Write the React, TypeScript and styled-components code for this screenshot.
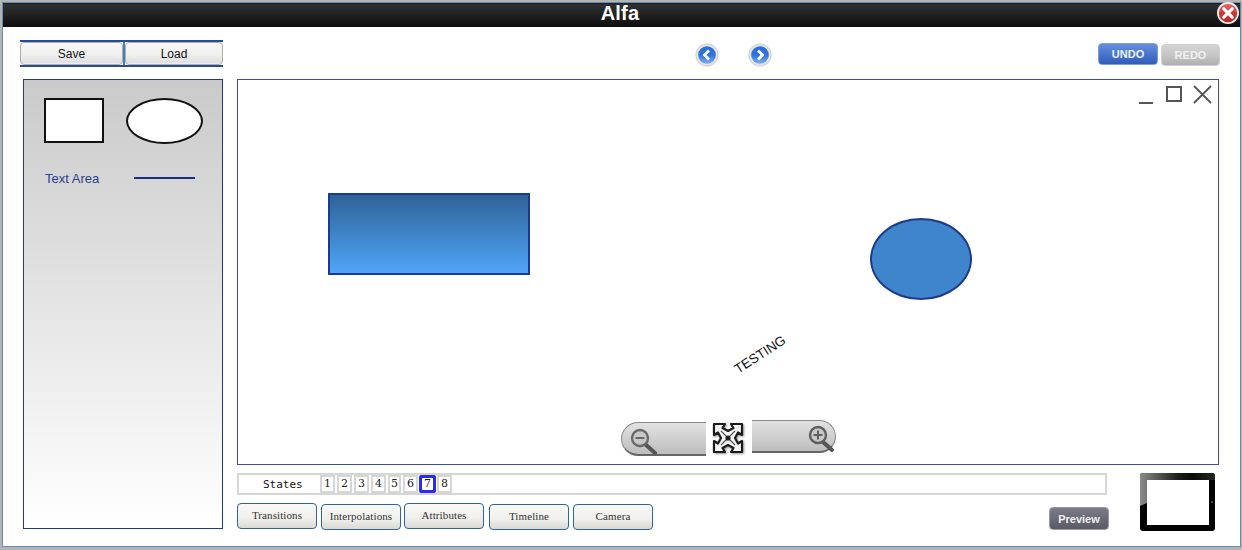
import React from "react";
import styled, { createGlobalStyle } from "styled-components";

const Global = createGlobalStyle`
  html, body { margin: 0; padding: 0; height: 550px; overflow: hidden; background: #b4b4b4; }
  * { box-sizing: border-box; }
`;

const Page = styled.div`
  width: 1242px;
  height: 550px;
  padding: 2px 1px 3px 2px;
  background: #b4b4b4;
  font-family: "Liberation Sans", Arial, sans-serif;
`;

const Window = styled.div`
  position: relative;
  width: 100%;
  height: 100%;
  background: #fff;
  border: 1px solid #5d8fbd;
  display: flex;
  flex-direction: column;
`;

const TitleBar = styled.div`
  height: 24px;
  flex: none;
  background: linear-gradient(#1c1c1c 0, #303030 8%, #0e0e0e 100%);
  color: #fff;
  font-size: 20px;
  font-weight: 700;
  letter-spacing: 0.2px;
  line-height: 20px;
  text-align: center;
  padding-right: 3px;
`;

const CloseButton = styled.svg`
  position: absolute;
  top: -2px;
  right: 0;
  width: 24px;
  height: 24px;
`;

const Body = styled.div`
  display: grid;
  grid-template-columns: 217px 983px;
  grid-template-rows: 27px 1fr;
  row-gap: 12px;
  padding: 13px 0 0 17px;
`;

const FileGroup = styled.div`
  display: flex;
  width: 203px;
  height: 27px;
  border-top: 2px solid #2b4a94;
  border-bottom: 2px solid #2b4a94;
  align-items: stretch;
  gap: 2px;
  background: linear-gradient(90deg, transparent 103px, #3f7fc4 103px, #3f7fc4 105px, transparent 105px);
`;

const FileButton = styled.button<{ $wide?: boolean }>`
  flex: none;
  width: ${(p) => (p.$wide ? "103px" : "98px")};
  margin: 0;
  padding: 0;
  border: 1px solid #b3aea4;
  border-radius: 4px;
  background: linear-gradient(#f8f8f8, #efefef 55%, #e0e0e0 92%, #f2f2f2);
  font: 12px "Liberation Sans", Arial, sans-serif;
  color: #111;
`;

const TopBar = styled.div`
  display: flex;
  align-items: flex-start;
  position: relative;
`;

const NavGroup = styled.div`
  display: flex;
  gap: 29px;
  margin: 3px 0 0 458px;
`;

const NavIcon = styled.svg`
  width: 24px;
  height: 24px;
  display: block;
`;

const HistoryGroup = styled.div`
  display: flex;
  gap: 3px;
  margin-left: 326px;
  margin-top: 3px;
`;

const HistoryButton = styled.button<{ $active?: boolean }>`
  width: ${(p) => (p.$active ? "60px" : "59px")};
  height: 22px;
  margin: ${(p) => (p.$active ? "0" : "1px 0 0 0")};
  padding: 0;
  border-radius: 4px;
  border: 1px solid ${(p) => (p.$active ? "#7f9fd8" : "#d0d0d0")};
  background: ${(p) =>
    p.$active
      ? "linear-gradient(#6790dc, #4a76cd 50%, #2f5cbc)"
      : "linear-gradient(#d4d4d4, #c6c6c6 50%, #b0b0b0)"};
  color: ${(p) => (p.$active ? "#eef3ff" : "#f1f1f1")};
  font: 700 11px "Liberation Sans", Arial, sans-serif;
`;

const Sidebar = styled.aside`
  margin-left: 3px;
  width: 200px;
  height: 450px;
  border: 1px solid #1f3a8c;
  background: linear-gradient(#cacaca, #ffffff);
  display: grid;
  grid-template-columns: 82px 1fr;
  grid-template-rows: 46px auto;
  align-content: start;
  row-gap: 27px;
  padding: 18px 0 0 20px;
`;

const RectShape = styled.div`
  width: 60px;
  height: 45px;
  background: #fff;
  border: 2px solid #111;
`;

const EllipseShape = styled.div`
  width: 77px;
  height: 46px;
  background: #fff;
  border: 2px solid #111;
  border-radius: 50%;
`;

const ToolLabel = styled.div`
  font-size: 13px;
  line-height: 15px;
  color: #2a3f8f;
  padding-left: 1px;
`;

const ToolLine = styled.div`
  width: 61px;
  height: 2px;
  margin: 6px 0 0 8px;
  background: #1a307f;
`;

const Main = styled.main`
  display: flex;
  flex-direction: column;
  width: 983px;
`;

const Canvas = styled.section`
  position: relative;
  width: 982px;
  height: 386px;
  border: 1px solid #3b4f94;
  background: #fff;
`;

const CanvasRect = styled.div`
  position: absolute;
  left: 90px;
  top: 113px;
  width: 202px;
  height: 82px;
  border: 2px solid #1e3a8a;
  background: linear-gradient(#2f6397, #4fa5f7);
`;

const CanvasEllipse = styled.div`
  position: absolute;
  left: 632px;
  top: 138px;
  width: 102px;
  height: 82px;
  border: 2px solid #1e3a8a;
  border-radius: 50%;
  background: #3f85cb;
`;

const CanvasText = styled.div`
  position: absolute;
  left: 493px;
  top: 267px;
  font-size: 13.4px;
  line-height: 15px;
  color: #111;
  transform: rotate(-33deg);
`;

const WindowIcons = styled.svg`
  position: absolute;
  right: 4px;
  top: 4px;
  width: 76px;
  height: 22px;
`;

const ZoomBar = styled.div`
  position: absolute;
  left: 383px;
  top: 339px;
  display: flex;
  align-items: flex-start;
  gap: 6px;
`;

const ZoomOut = styled.div`
  width: 85px;
  height: 34px;
  margin-top: 3px;
  border: 1px solid #8a8a8a;
  border-right: none;
  border-bottom: 2px solid #666;
  border-radius: 17px 0 0 17px;
  background: linear-gradient(#e2e2e2, #bdbdbd);
  padding: 4px 0 0 7px;
`;

const ZoomIn = styled.div`
  width: 84px;
  height: 33px;
  margin: 1px 0 0 2px;
  border: 1px solid #8a8a8a;
  border-left: none;
  border-bottom: 2px solid #666;
  border-radius: 0 17px 17px 0;
  background: linear-gradient(#e2e2e2, #bdbdbd);
  display: flex;
  justify-content: flex-end;
  padding: 4px 0 0 0;
`;

const ZoomGlyph = styled.svg`
  width: 30px;
  height: 28px;
  display: block;
`;

const FitIcon = styled.svg`
  width: 32px;
  height: 32px;
  margin-top: 3px;
  display: block;
  filter: drop-shadow(1px 1px 1px #999);
`;

const Bottom = styled.div`
  display: grid;
  grid-template-columns: 870px 1fr;
  margin-top: 8px;
`;

const Controls = styled.div`
  display: flex;
  flex-direction: column;
  gap: 8px;
`;

const StatesBar = styled.div`
  height: 22px;
  width: 870px;
  border: 2px solid #d6d6d6;
  display: flex;
  align-items: center;
  padding-left: 24px;
`;

const StatesLabel = styled.span`
  font: 11px "DejaVu Sans Mono", monospace;
  width: 57px;
  color: #111;
`;

const StateCells = styled.div`
  display: flex;
  gap: 2px;
`;

const StateCell = styled.div<{ $selected?: boolean; $narrow?: boolean }>`
  width: ${(p) => (p.$selected ? "17px" : p.$narrow ? "13px" : "15px")};
  height: 18px;
  margin-right: ${(p) => (p.$selected ? "-1px" : "0")};
  margin-left: ${(p) => (p.$selected ? "-1px" : "0")};
  border: ${(p) => (p.$selected ? "3px solid #2a2af0" : "2px solid #d6d6d6")};
  border-radius: ${(p) => (p.$selected ? "2px" : "0")};
  font: 11px/14px "DejaVu Serif", serif;
  color: #222;
  display: flex;
  align-items: center;
  justify-content: center;
`;

const Tabs = styled.div`
  display: flex;
  gap: 4px;
  align-items: flex-start;
`;

const Tab = styled.button<{ $low?: boolean }>`
  width: 80px;
  height: 26px;
  margin: ${(p) => (p.$low ? "1px 0 0 0" : "0")};
  padding: 0 0 2px;
  border: 1px solid #2f6598;
  border-radius: 4px;
  background: linear-gradient(#f8f8f8, #f0efeb 60%, #d9d8d2);
  font: 11px "Liberation Serif", "Times New Roman", serif;
  letter-spacing: 0.1px;
  color: #333;
  &:nth-child(3) { margin-left: -1px; }
  &:nth-child(4) { margin-left: 1px; }
`;

const Side = styled.div`
  display: flex;
  align-items: flex-start;
  position: relative;
`;

const PreviewButton = styled.button`
  width: 60px;
  height: 23px;
  margin: 34px 0 0 -58px;
  padding: 0;
  border: 1px solid #9a9aa4;
  border-radius: 4px;
  background: linear-gradient(#7a7a88, #5a5a68);
  color: #f2f2f2;
  font: 700 11px "Liberation Sans", Arial, sans-serif;
`;

const Tablet = styled.div`
  position: relative;
  overflow: hidden;
  width: 75px;
  height: 58px;
  margin: 0 0 0 31px;
  border-radius: 3px;
  background: #030303;
  padding: 7px 6px 6px 7px;
`;

const TabletGlare = styled.div`
  position: absolute;
  inset: 0 0 auto 0;
  height: 33px;
  background: linear-gradient(90deg, #8a8a8a 0, #5c5c5c 22%, #1e1e1e 50%, #0a0a0a 70%, #262626 100%);
  clip-path: polygon(0 0, 100% 0, 100% 7px, 7px 7px, 7px 30px, 0 33px);
`;

const TabletScreen = styled.div`
  position: relative;
  width: 100%;
  height: 100%;
  background: #fff;
`;

const TabletCamera = styled.div`
  position: absolute;
  right: 2px;
  top: 28px;
  width: 2px;
  height: 2px;
  background: #444;
`;

const ZoomMagnifier = ({ plus }: { plus?: boolean }) => (
  <ZoomGlyph viewBox="0 0 30 28">
    {plus ? (
      <>
        <path d="M18 17 L27 25" stroke="#555" strokeWidth="4" strokeLinecap="round" />
        <circle cx="13" cy="10" r="8" fill="#c8c8c8" stroke="#5f5f5f" strokeWidth="2.4" />
        <path d="M8.5 10h9M13 5.5v9" stroke="#5f5f5f" strokeWidth="2" />
      </>
    ) : (
      <>
        <path d="M16 17 L26 26" stroke="#555" strokeWidth="4" strokeLinecap="round" />
        <circle cx="11" cy="11" r="8" fill="#c8c8c8" stroke="#6a6a6a" strokeWidth="2.4" />
        <path d="M6.5 11h9" stroke="#666" strokeWidth="2" />
      </>
    )}
  </ZoomGlyph>
);

const Nav = ({ dir }: { dir: "left" | "right" }) => (
  <NavIcon viewBox="0 0 24 24">
    <defs>
      <linearGradient id={"nav" + dir} x1="0" y1="0" x2="0" y2="1">
        <stop offset="0" stopColor="#2a6fd6" />
        <stop offset="0.5" stopColor="#2e74dc" />
        <stop offset="1" stopColor="#7fb0ee" />
      </linearGradient>
    </defs>
    <circle cx="12" cy="12" r="11.2" fill="#e4e4e4" stroke="#cfcfcf" />
    <circle cx="12" cy="12" r="8.8" fill={`url(#nav${dir})`} />
    <path
      d={dir === "left" ? "M14 7.5 L9.5 12 L14 16.5" : "M10 7.5 L14.5 12 L10 16.5"}
      fill="none"
      stroke="#fff"
      strokeWidth="2.8"
    />
  </NavIcon>
);

const FIT_OUTLINE =
  "M2 2H13L10.5 6L16 9L21.5 6L19 2H30V13L26 10.5L23 16L26 21.5L30 19V30H19L21.5 26L16 23L10.5 26L13 30H2V19L6 21.5L9 16L6 10.5L2 13Z";

export default function App() {
  const states = [1, 2, 3, 4, 5, 6, 7, 8];
  return (
    <Page>
      <Global />
      <Window>
        <TitleBar>Alfa</TitleBar>
        <CloseButton viewBox="0 0 24 24">
          <defs>
            <linearGradient id="closeFill" x1="0" y1="0" x2="0" y2="1">
              <stop offset="0" stopColor="#e86a6a" />
              <stop offset="0.5" stopColor="#cf3434" />
              <stop offset="1" stopColor="#b52a2a" />
            </linearGradient>
          </defs>
          <circle cx="12" cy="12" r="11" fill="#f1f1f1" />
          <circle cx="12" cy="12" r="9.2" fill="url(#closeFill)" />
          <path d="M7.8 7.8 L16.2 16.2 M16.2 7.8 L7.8 16.2" stroke="#fff" strokeWidth="3.2" strokeLinecap="round" />
        </CloseButton>
        <Body>
          <FileGroup>
            <FileButton $wide>Save</FileButton>
            <FileButton>Load</FileButton>
          </FileGroup>
          <TopBar>
            <NavGroup>
              <Nav dir="left" />
              <Nav dir="right" />
            </NavGroup>
            <HistoryGroup>
              <HistoryButton $active>UNDO</HistoryButton>
              <HistoryButton>REDO</HistoryButton>
            </HistoryGroup>
          </TopBar>
          <Sidebar>
            <RectShape />
            <EllipseShape />
            <ToolLabel>Text Area</ToolLabel>
            <ToolLine />
          </Sidebar>
          <Main>
            <Canvas>
              <CanvasRect />
              <CanvasEllipse />
              <CanvasText>TESTING</CanvasText>
              <WindowIcons viewBox="0 0 76 22" fill="none" stroke="#555">
                <path d="M1 19h14" strokeWidth="2" />
                <rect x="29" y="3" width="14" height="14" strokeWidth="2" />
                <path d="M56 2 L73 19 M73 2 L56 19" strokeWidth="1.8" />
              </WindowIcons>
              <ZoomBar>
                <ZoomOut>
                  <ZoomMagnifier />
                </ZoomOut>
                <FitIcon viewBox="0 0 32 32">
                  <path d={FIT_OUTLINE} fill="#f6f6f6" stroke="#1d1d1d" strokeWidth="2.2" strokeLinejoin="round" />
                  <path d="M9 9L23 23M23 9L9 23" stroke="#555" strokeWidth="1.2" />
                  <circle cx="16" cy="16" r="2.6" fill="#222" />
                </FitIcon>
                <ZoomIn>
                  <ZoomMagnifier plus />
                </ZoomIn>
              </ZoomBar>
            </Canvas>
            <Bottom>
              <Controls>
                <StatesBar>
                  <StatesLabel>States</StatesLabel>
                  <StateCells>
                    {states.map((n) => (
                      <StateCell key={n} $selected={n === 7} $narrow={n === 5}>
                        {n}
                      </StateCell>
                    ))}
                  </StateCells>
                </StatesBar>
                <Tabs>
                  <Tab>Transitions</Tab>
                  <Tab $low>Interpolations</Tab>
                  <Tab>Attributes</Tab>
                  <Tab $low>Timeline</Tab>
                  <Tab $low>Camera</Tab>
                </Tabs>
              </Controls>
              <Side>
                <PreviewButton>Preview</PreviewButton>
                <Tablet>
                  <TabletGlare />
                  <TabletScreen />
                  <TabletCamera />
                </Tablet>
              </Side>
            </Bottom>
          </Main>
        </Body>
      </Window>
    </Page>
  );
}
